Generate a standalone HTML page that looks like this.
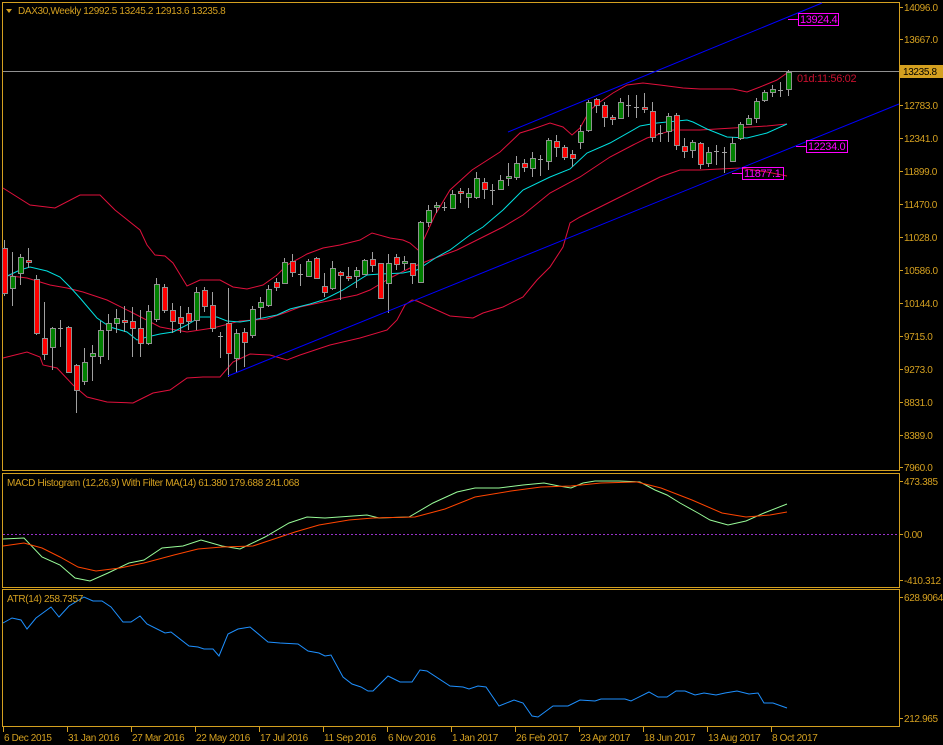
<!DOCTYPE html>
<html><head><meta charset="utf-8"><style>
html,body{margin:0;padding:0;background:#000;width:943px;height:745px;overflow:hidden}
svg{display:block}
text{font-family:"Liberation Sans",sans-serif;font-size:10px;letter-spacing:-0.35px;fill:#d4a020}
</style></head><body>
<svg id="s" width="943" height="745" viewBox="0 0 943 745" xmlns="http://www.w3.org/2000/svg">
<rect width="943" height="745" fill="#000"/>
<g fill="none" stroke="#d4a020" stroke-width="1">
<rect x="2.5" y="2.5" width="897" height="468"/>
<rect x="2.5" y="473.5" width="897" height="114"/>
<rect x="2.5" y="589.5" width="897" height="137"/>
</g>
<line x1="3" y1="71.5" x2="899" y2="71.5" stroke="#909090"/>
<g id="lines"></g>
<g id="candles"></g>
<line x1="228" y1="376" x2="899" y2="104" stroke="#0000ff"/>
<line x1="508" y1="132" x2="822" y2="3" stroke="#0000ff"/>
<g stroke="#ff00ff" fill="none">
<line x1="788" y1="19.5" x2="798" y2="19.5"/><rect x="798.5" y="13.5" width="40" height="12"/>
<line x1="796" y1="146.5" x2="806" y2="146.5"/><rect x="806.5" y="140.5" width="41" height="12"/>
<line x1="732" y1="173.5" x2="742" y2="173.5"/><rect x="742.5" y="167.5" width="41" height="12"/>
</g>
<text x="800" y="23" style="fill:#ff00ff;font-size:11px">13924.4</text>
<text x="808" y="150" style="fill:#ff00ff;font-size:11px">12234.0</text>
<text x="744" y="177" style="fill:#ff00ff;font-size:11px">11877.1</text>
<text x="797" y="82" style="fill:#c8102e;font-size:11px">01d:11:56:02</text>
<polygon points="6,9 12,9 9,13" fill="#d4a020"/>
<text x="18" y="14">DAX30,Weekly  12992.5 13245.2 12913.6 13235.8</text>
<text x="7" y="486">MACD Histogram (12,26,9) With Filter MA(14) 61.380 179.688 241.068</text>
<text x="7" y="602">ATR(14) 258.7357</text>
<g id="axis"></g>
<rect x="900" y="65" width="43" height="13" fill="#d4a020"/>
<text x="903" y="75" style="fill:#000">13235.8</text>
<line x1="3" y1="534.5" x2="899" y2="534.5" stroke="#9932cc" stroke-dasharray="2,2"/>
</svg>
<script>
var NS="http://www.w3.org/2000/svg";
function el(p,t,a){var e=document.createElementNS(NS,t);for(var k in a)e.setAttribute(k,a[k]);p.appendChild(e);return e;}
var C=[[248,293,240,296,'r'],[276,288,252,306,'g'],[257,273,254,285,'g'],[260,262,248,268,'r'],[279,333,275,335,'r'],[338,354,302,360,'r'],[328,347,327,370,'g'],[328,329,320,347,'d'],[327,372,326,373,'r'],[365,390,364,413,'r'],[362,381,348,385,'g'],[353,356,345,381,'g'],[330,356,321,364,'g'],[323,330,314,360,'g'],[318,323,309,333,'g'],[320,322,306,332,'r'],[321,328,307,357,'r'],[328,343,310,357,'r'],[311,343,305,345,'g'],[284,319,278,322,'g'],[287,310,284,313,'r'],[310,321,303,333,'r'],[317,323,306,333,'r'],[313,321,307,330,'r'],[292,320,287,330,'g'],[290,306,287,312,'r'],[305,328,292,332,'r'],[336,337,332,358,'d'],[323,353,288,377,'r'],[333,358,329,373,'g'],[332,342,328,367,'r'],[309,335,306,338,'g'],[302,307,297,319,'g'],[289,305,285,307,'g'],[282,287,278,291,'r'],[262,283,258,283,'g'],[261,272,254,277,'r'],[274,275,264,286,'d'],[261,276,259,277,'g'],[258,278,257,279,'r'],[286,292,273,297,'r'],[268,288,261,290,'g'],[272,275,271,300,'r'],[276,278,267,281,'r'],[270,276,267,288,'g'],[260,274,259,275,'g'],[259,265,252,272,'r'],[263,298,263,299,'r'],[263,283,254,313,'g'],[257,264,254,270,'r'],[261,263,256,270,'g'],[263,275,263,284,'r'],[222,282,221,282,'g'],[210,222,205,227,'g'],[205,207,202,213,'g'],[207,208,202,211,'d'],[194,208,190,209,'g'],[191,193,188,203,'r'],[193,197,188,208,'g'],[178,197,172,199,'g'],[182,189,178,199,'r'],[190,191,184,205,'d'],[180,189,175,190,'g'],[176,178,163,186,'g'],[163,177,156,180,'g'],[163,167,159,172,'r'],[158,168,152,177,'g'],[159,160,155,176,'d'],[140,161,138,170,'g'],[141,147,135,157,'r'],[147,157,145,160,'r'],[154,158,150,167,'r'],[131,142,125,149,'g'],[102,130,100,132,'g'],[99,105,98,113,'r'],[105,117,102,127,'r'],[117,119,115,125,'r'],[102,118,98,119,'g'],[105,106,95,117,'d'],[107,108,95,118,'d'],[107,109,93,113,'r'],[111,137,102,142,'r'],[133,134,125,142,'d'],[116,131,113,142,'g'],[115,145,113,150,'r'],[146,151,138,158,'r'],[142,150,140,158,'g'],[143,164,142,169,'r'],[152,163,147,167,'g'],[151,152,145,165,'d'],[152,153,147,173,'d'],[143,161,137,162,'g'],[124,138,122,140,'g'],[118,124,115,125,'g'],[101,118,98,123,'g'],[92,100,90,102,'g'],[89,92,85,97,'g'],[90,91,82,97,'d'],[72,89,70,96,'g']];
var cg=document.getElementById('candles');
C.forEach(function(c,i){var x=4+8*i;
el(cg,'line',{x1:x+.5,y1:c[2],x2:x+.5,y2:c[3],stroke:'#a0a0a0'});
if(c[4]=='d'){el(cg,'line',{x1:x-2,y1:c[0]+.5,x2:x+3,y2:c[0]+.5,stroke:'#a0a0a0'});}
else el(cg,'rect',{x:x-1.5,y:c[0]+.5,width:5,height:Math.max(1,c[1]-c[0]),fill:c[4]=='r'?'#ff0000':'#008000',stroke:'#909090'});
});
var lg=document.getElementById('lines');
function pl(pts,col){el(lg,'polyline',{points:pts,fill:'none',stroke:col,'stroke-width':1});}
pl("3,188 30,205 55,208 80,195 100,195 115,210 140,230 147,245 155,255 165,256 173,263 187,286 200,280 220,280 233,287 247,289 263,285 277,275 287,265 300,258 307,254 323,248 340,245 360,240 372,233 390,238 403,240 410,243 418,250 420,248 435,215 450,190 472,170 500,152 520,133 533,129 550,123 563,127 572,135 580,128 590,110 600,102 613,93 627,85 643,83 660,85 683,88 700,89 733,89 747,92 760,87 777,80 787,73","#e0103c");
pl("3,275 27,278 50,285 67,288 83,292 107,300 133,313 160,327 187,332 213,328 240,321 267,319 287,312 300,307 323,302 357,295 370,290 390,278 410,268 430,260 457,250 477,240 503,227 523,215 550,193 580,177 610,157 633,145 647,138 673,130 700,130 733,128 767,126 787,124","#e0103c");
pl("3,358 27,352 40,357 43,365 57,368 73,385 87,397 107,402 133,403 143,398 153,393 170,390 187,378 203,377 220,377 233,362 250,354 270,355 287,360 300,355 330,345 360,338 387,330 397,320 405,305 412,300 417,301 430,307 450,316 473,318 483,313 503,307 523,297 537,280 550,267 563,247 570,223 580,217 600,207 620,197 640,187 660,177 680,170 700,170 740,168 767,172 787,176","#e0103c");
pl("3,278 20,270 30,267 47,271 60,277 70,287 80,298 97,318 110,327 127,332 137,340 147,337 160,334 173,332 187,325 200,317 217,317 227,321 240,322 253,320 277,315 290,309 310,304 323,300 343,290 367,275 380,274 403,273 417,270 437,257 450,250 470,235 483,227 503,210 523,190 550,177 570,169 587,153 610,143 640,126 657,123 687,120 693,122 707,129 727,137 747,138 767,133 787,124","#00e0e0");
pl("3,539 24,538 42,557 60,565 75,578 90,581 108,573 129,563 144,560 162,548 183,546 201,540 222,546 240,549 265,537 289,523 307,517 325,518 367,515 379,518 409,517 433,503 457,492 475,488 499,488 523,485 544,483 559,486 571,488 583,483 595,481 619,481 640,482 655,490 667,495 680,503 698,513 710,520 728,525 746,521 764,513 787,504","#98fb98");
pl("3,546 24,543 42,548 60,557 78,567 96,571 120,568 144,563 174,555 198,549 222,547 253,546 277,538 295,532 319,525 349,520 373,518 415,517 445,509 475,497 511,491 541,487 571,486 601,483 637,482 661,488 692,500 722,513 746,517 770,515 787,512","#ff4500");
pl("3,623 12,618 21,620 27,629 36,618 51,607 59,617 69,606 84,597 93,601 102,601 111,607 123,622 131,622 140,616 147,624 165,633 171,632 189,646 198,647 204,649 213,649 219,656 228,634 238,629 250,627 268,642 280,643 298,644 308,651 319,653 325,656 331,655 343,677 352,684 361,687 368,691 373,691 388,676 400,682 412,682 420,670 427,671 450,686 463,687 469,689 478,686 486,687 499,706 514,700 523,703 532,716 538,717 553,706 568,706 580,700 595,701 601,699 625,699 631,701 649,692 658,697 667,697 676,691 685,691 695,695 704,693 716,695 725,693 737,691 749,694 758,693 764,703 773,703 787,708","#1e90ff");
var ax=document.getElementById('axis');
var P=[["14096.0",7],["13667.0",39],["12783.0",105],["12341.0",138],["11899.0",171],["11470.0",204],["11028.0",237],["10586.0",270],["10144.0",303],["9715.0",336],["9273.0",369],["8831.0",402],["8389.0",435],["7960.0",467],["473.385",481],["0.00",534],["-410.312",580],["628.9064",597],["212.965",718]];
P.forEach(function(p){el(ax,'line',{x1:899,y1:p[1]+.5,x2:903,y2:p[1]+.5,stroke:'#d4a020'});var t=el(ax,'text',{x:904,y:p[1]+4});t.textContent=p[0];});
var T=["6 Dec 2015","31 Jan 2016","27 Mar 2016","22 May 2016","17 Jul 2016","11 Sep 2016","6 Nov 2016","1 Jan 2017","26 Feb 2017","23 Apr 2017","18 Jun 2017","13 Aug 2017","8 Oct 2017"];
T.forEach(function(s,i){var x=3+64*i;el(ax,'line',{x1:x+.5,y1:727,x2:x+.5,y2:732,stroke:'#d4a020'});var t=el(ax,'text',{x:x+1,y:741});t.textContent=s;});
</script>
</body></html>
